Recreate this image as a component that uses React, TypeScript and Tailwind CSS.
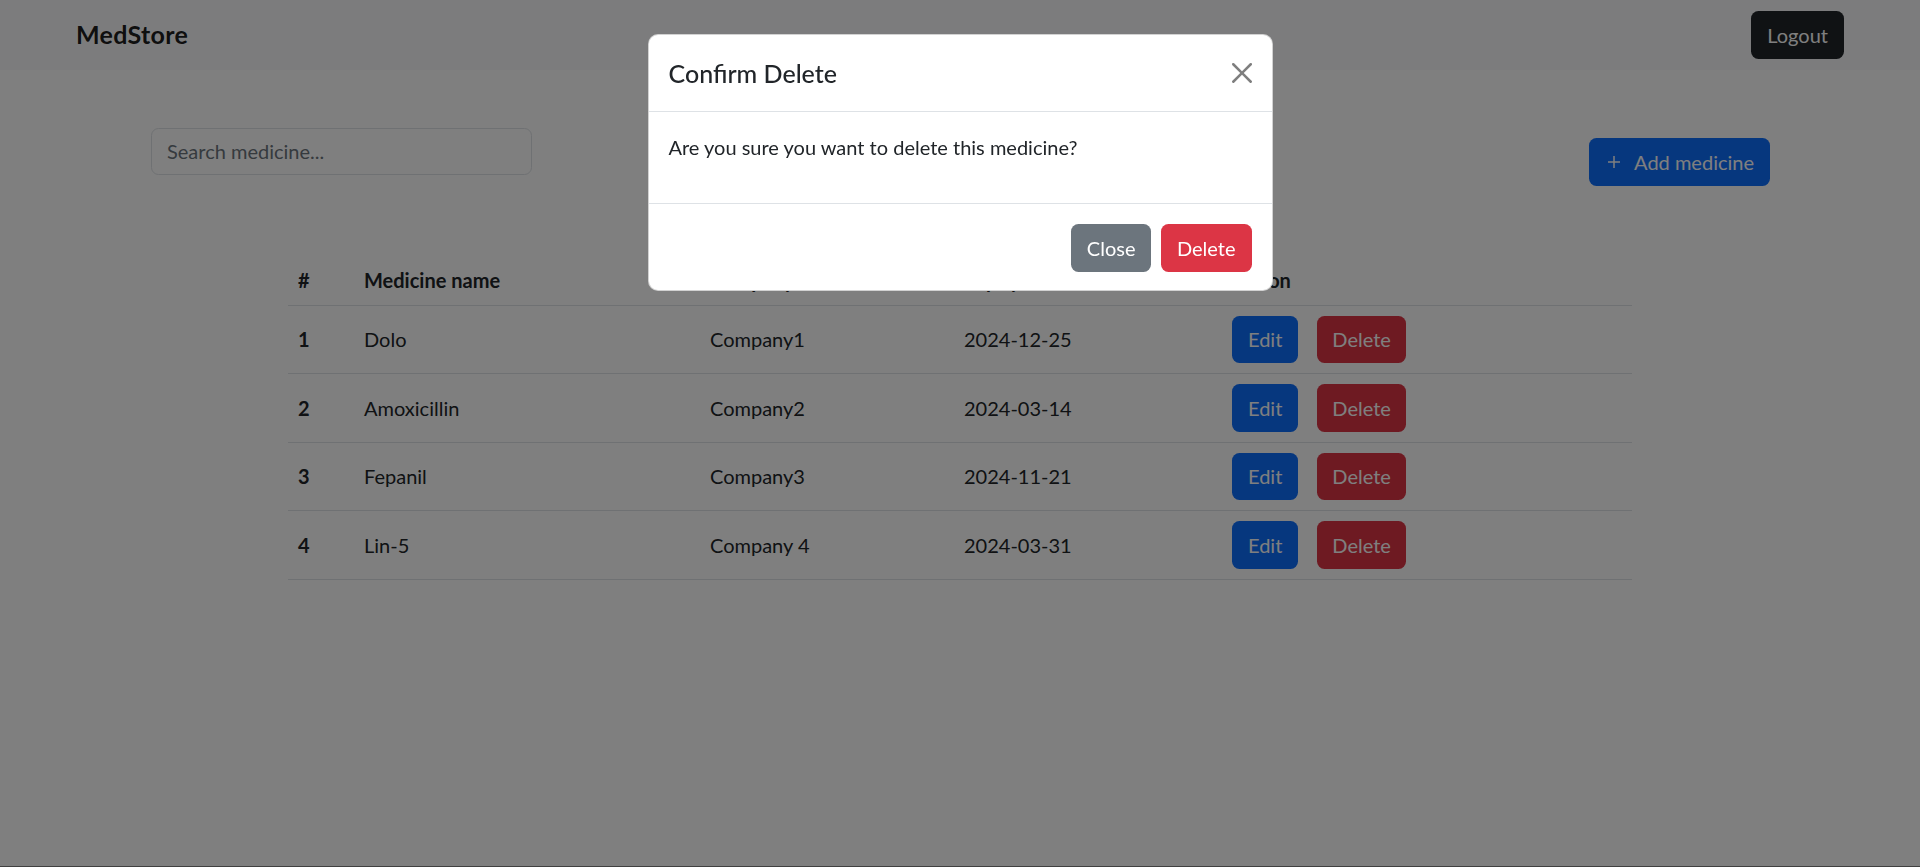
import { useState } from 'react';

type Medicine = {
    id: number;
    name: string;
    company: string;
    expiry: string;
};

const medicines: Medicine[] = [
    { id: 1, name: 'Dolo', company: 'Company1', expiry: '2024-12-25' },
    { id: 2, name: 'Amoxicillin', company: 'Company2', expiry: '2024-03-14' },
    { id: 3, name: 'Fepanil', company: 'Company3', expiry: '2024-11-21' },
    { id: 4, name: 'Lin-5', company: 'Company 4', expiry: '2024-03-31' },
];

function PlusIcon() {
    return (
        <svg width="20" height="20" viewBox="0 0 20 20" fill="none" stroke="currentColor" strokeWidth="1.5">
            <path d="M10 4v12M4 10h12" />
        </svg>
    );
}

function CloseIcon() {
    return (
        <svg width="20" height="20" viewBox="0 0 16 16" className="opacity-50">
            <path
                fill="#000"
                d="M.293.293a1 1 0 0 1 1.414 0L8 6.586 14.293.293a1 1 0 1 1 1.414 1.414L9.414 8l6.293 6.293a1 1 0 0 1-1.414 1.414L8 9.414l-6.293 6.293a1 1 0 0 1-1.414-1.414L6.586 8 .293 1.707a1 1 0 0 1 0-1.414z"
            />
        </svg>
    );
}

export default function App() {
    // modal ouvert par défaut, comme sur la capture
    const [showModal, setShowModal] = useState(true);

    return (
        <div className="h-[867px] flex flex-col bg-white text-[20px] text-[#212529] font-['Segoe_UI',Lato,sans-serif]">
            <nav className="h-[70px] bg-[#f8f9fa] flex items-center justify-between px-[76px]">
                <span className="text-[25px] font-bold text-black/90 leading-[1.5] tracking-[0.3px]">MedStore</span>
                <button className="h-[47.5px] px-[16px] rounded-[7.5px] bg-[#212529] text-white leading-[1.5]">
                    Logout
                </button>
            </nav>

            <div className="flex items-start justify-between px-[151px] pr-[150px]">
                <input
                    type="text"
                    placeholder="Search medicine..."
                    className="mt-[58px] w-[381px] h-[46.5px] px-[15px] border border-[#dee2e6] rounded-[7.5px] placeholder:text-[#6c757d] outline-none"
                />
                <button className="mt-[68px] h-[47.5px] pl-[15px] pr-[16px] rounded-[7.5px] bg-[#0d6efd] text-white flex items-center gap-[10px] leading-[1.5]">
                    <PlusIcon />
                    Add medicine
                </button>
            </div>

            <table className="w-[70%] mx-auto mt-[69px] border-collapse text-left">
                <thead>
                    <tr className="border-b border-[#dee2e6]">
                        <th className="w-[66px] p-[10px] leading-[30px] font-bold">#</th>
                        <th className="w-[346px] p-[10px] leading-[30px] font-bold">Medicine name</th>
                        <th className="w-[254px] p-[10px] leading-[30px] font-bold">Company</th>
                        <th className="w-[268px] p-[10px] leading-[30px] font-bold">Expiry date</th>
                        <th className="p-[10px] leading-[30px] font-bold">Action</th>
                    </tr>
                </thead>
                <tbody>
                    {medicines.map(med => (
                        <tr key={med.id} className="border-b border-[#dee2e6]">
                            <td className="p-[10px] font-bold">{med.id}</td>
                            <td className="p-[10px]">{med.name}</td>
                            <td className="p-[10px]">{med.company}</td>
                            <td className="p-[10px]">{med.expiry}</td>
                            <td className="p-[10px]">
                                <div className="flex gap-[19px]">
                                    <button className="h-[47.5px] px-[16px] rounded-[7.5px] bg-[#0d6efd] text-white leading-[1.5]">Edit</button>
                                    <button className="h-[47.5px] px-[15px] rounded-[7.5px] bg-[#dc3545] text-white leading-[1.5]" onClick={() => setShowModal(true)}>
                                        Delete
                                    </button>
                                </div>
                            </td>
                        </tr>
                    ))}
                </tbody>
            </table>

            <div className="flex-1" />
            <div className="h-px bg-[#808080]" />

            {showModal && (
                <>
                    <div className="fixed inset-0 bg-black/50" />
                    <div className="fixed inset-0 flex justify-center items-start">
                        <div className="mt-[34px] w-[625px] bg-white rounded-[10px] border border-black/[0.175]">
                            <div className="flex items-center justify-between p-[20px] border-b border-[#dee2e6]">
                                <h5 className="text-[25px] font-medium leading-[36px]">Confirm Delete</h5>
                                <button onClick={() => setShowModal(false)}>
                                    <CloseIcon />
                                </button>
                            </div>
                            <div className="p-[20px]">
                                <p className="mb-[21px] leading-[30px]">Are you sure you want to delete this medicine?</p>
                            </div>
                            <div className="flex justify-end gap-[10px] px-[20px] pt-[20px] pb-[18px] border-t border-[#dee2e6]">
                                <button className="h-[47.5px] px-[15.5px] rounded-[7.5px] bg-[#6c757d] text-white leading-[1.5]" onClick={() => setShowModal(false)}>
                                    Close
                                </button>
                                <button className="h-[47.5px] px-[16px] rounded-[7.5px] bg-[#dc3545] text-white leading-[1.5]">
                                    Delete
                                </button>
                            </div>
                        </div>
                    </div>
                </>
            )}
        </div>
    );
}
